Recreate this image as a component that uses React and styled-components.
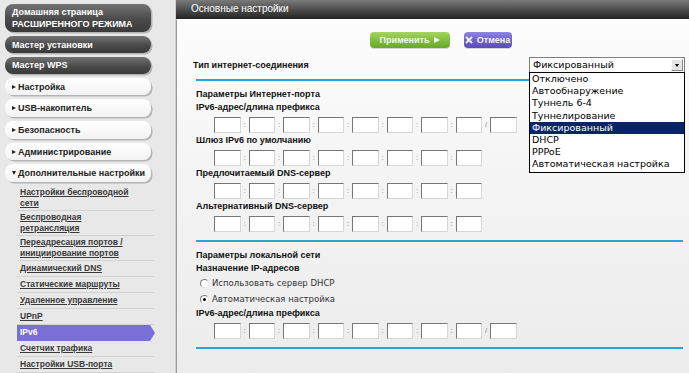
import React from "react";
import styled, { createGlobalStyle } from "styled-components";

const GlobalStyle = createGlobalStyle`
  html, body {
    margin: 0;
    padding: 0;
  }
  body {
    width: 689px;
    height: 373px;
    overflow: hidden;
    background: #e8e8e8;
    font-family: "Liberation Sans", Arial, sans-serif;
  }
`;

const Page = styled.div`
  display: flex;
  width: 689px;
  height: 373px;
  overflow: hidden;
`;

/* ---------- sidebar ---------- */

const Sidebar = styled.nav`
  width: 176px;
  flex-shrink: 0;
  box-sizing: border-box;
  background: #e8e8e8;
  border-right: 1px solid #d0d0d0;
  padding: 4px 0 0 5px;
  display: flex;
  flex-direction: column;
`;

const MenuButton = styled.div`
  width: 146px;
  height: ${({ $size }) => ($size === "tall" ? 29 : $size === "dark" ? 17 : 18)}px;
  margin-top: ${({ $first }) => ($first ? 0 : 4)}px;
  box-sizing: border-box;
  border-radius: 8px;
  padding-left: ${({ $size }) => ($size === "light" ? 7 : 7)}px;
  display: flex;
  align-items: center;
  gap: 2px;
  font: bold 9px/12px "Liberation Sans", Arial, sans-serif;
  color: ${({ $size }) => ($size === "light" ? "#222" : "#fff")};
  background: ${({ $size }) =>
    $size === "light"
      ? "linear-gradient(#ffffff, #f3f3f3)"
      : "linear-gradient(#737373, #4a4a4a 55%, #3a3a3a)"};
  box-shadow: 1.5px 1.5px 0 #b4b4b4;
`;

const Arrow = styled.span`
  width: 0;
  height: 0;
  border-style: solid;
  border-color: transparent;
  ${({ $open }) =>
    $open
      ? "border-width: 4px 2.5px 0 2.5px; border-top-color: #222;"
      : "border-width: 2.5px 0 2.5px 4px; border-left-color: #222;"}
`;

const SubMenu = styled.div`
  margin: 4px 0 0 12px;
  width: 138px;
  display: flex;
  flex-direction: column;
`;

const SubItem = styled.a`
  min-height: 16px;
  box-sizing: border-box;
  padding: 1px 6px 1px 3px;
  display: flex;
  align-items: center;
  border-bottom: 1px solid ${({ $active }) => ($active ? "transparent" : "#d2d2d2")};
  font: bold 8.5px/11px "Liberation Sans", Arial, sans-serif;
  color: ${({ $active }) => ($active ? "#fff" : "#3a3a3a")};
  text-decoration: ${({ $active }) => ($active ? "none" : "underline")};
  background: ${({ $active }) => ($active ? "#7a6fd6" : "transparent")};
  clip-path: ${({ $active }) =>
    $active
      ? "polygon(0 0, calc(100% - 5px) 0, 100% 50%, calc(100% - 5px) 100%, 0 100%)"
      : "none"};
`;

/* ---------- main ---------- */

const Main = styled.main`
  flex: 1;
  min-width: 0;
  display: flex;
  flex-direction: column;
`;

const TitleBar = styled.div`
  height: 19px;
  flex-shrink: 0;
  padding-left: 15px;
  background: linear-gradient(#7a7a7a, #4e4e4e 50%, #242424);
  color: #fff;
  font: 10px/18px "Liberation Sans", Arial, sans-serif;
`;

const Body = styled.div`
  flex: 1;
  border-left: 1px solid #9a9a9a;
  border-top: 1px solid #ffffff;
  background: linear-gradient(#fdfdfd, #f3f3f3 50%, #ececec);
  padding: 12px 4px 0 19px;
  display: flex;
  flex-direction: column;
`;

const ButtonRow = styled.div`
  display: flex;
  justify-content: center;
  gap: 14px;
`;

const ActionButton = styled.button`
  width: ${({ $w }) => $w}px;
  height: 16px;
  border: none;
  border-radius: 4px;
  padding: 0;
  display: flex;
  align-items: center;
  justify-content: center;
  gap: 4px;
  color: #f4f4f4;
  font: bold 9px/16px "Liberation Sans", Arial, sans-serif;
  background: ${({ $kind }) =>
    $kind === "ok"
      ? "linear-gradient(#a5d462, #82bf3c 50%, #6aa82a)"
      : "linear-gradient(#8f86e2, #6f62cc 50%, #5a4db8)"};
  box-shadow: 0 1px 0 rgba(0, 0, 0, 0.15);
`;

const PlayTri = styled.span`
  width: 0;
  height: 0;
  border-style: solid;
  border-color: transparent transparent transparent #f4f4f4;
  border-width: 3.5px 0 3.5px 6px;
`;

const TypeRow = styled.div`
  margin-top: 9px;
  height: 16px;
  display: flex;
  align-items: center;
  justify-content: space-between;
`;

const Label = styled.div`
  font: bold 9px/13px "Liberation Sans", Arial, sans-serif;
  color: #111;
  margin-left: ${({ $shift }) => $shift || 0}px;
`;

const SelectWrap = styled.div`
  position: relative;
  width: 156px;
  height: 16px;
`;

const SelectBox = styled.div`
  height: 16px;
  box-sizing: border-box;
  border: 1px solid #7f7f7f;
  background: #fff;
  display: flex;
  align-items: center;
  padding-left: 3px;
  font: 9.5px/14px "DejaVu Sans", Verdana, sans-serif;
  color: #000;
`;

const SelectText = styled.span`
  flex: 1;
`;

const SelectArrow = styled.span`
  width: 12px;
  height: 12px;
  margin-right: 1px;
  box-sizing: border-box;
  background: #e4e4e4;
  border: 1px solid;
  border-color: #fff #888 #888 #fff;
  display: flex;
  align-items: center;
  justify-content: center;
  &::after {
    content: "";
    border-style: solid;
    border-color: #000 transparent transparent transparent;
    border-width: 3px 2.5px 0 2.5px;
  }
`;

const OptionList = styled.ul`
  position: absolute;
  top: 15px;
  left: 0;
  z-index: 5;
  width: 156px;
  box-sizing: border-box;
  margin: 0;
  padding: 0 0 1px;
  list-style: none;
  border: 1px solid #000;
  background: #fff;
`;

const Option = styled.li`
  height: 12.2px;
  padding-left: 2px;
  font: 9.5px/12.2px "DejaVu Sans", Verdana, sans-serif;
  white-space: nowrap;
  color: ${({ $selected }) => ($selected ? "#fff" : "#000")};
  background: ${({ $selected }) => ($selected ? "#0a246a" : "transparent")};
`;

const Divider = styled.div`
  height: 2px;
  margin: ${({ $top }) => $top}px 2px 0 0;
  background: #27a6dc;
  flex-shrink: 0;
`;

const Heading = styled(Label)`
  margin-top: ${({ $top }) => $top || 0}px;
`;

const FieldRow = styled.div`
  height: 20px;
  box-sizing: border-box;
  padding: 3px 0 0 18px;
  display: flex;
  align-items: flex-start;
`;

const Field = styled.input`
  width: 26.5px;
  height: 16px;
  box-sizing: border-box;
  margin: 0;
  padding: 0;
  border: 1px solid;
  border-color: #767676 #d6d6d6 #d6d6d6 #767676;
  background: #fff;
  flex-shrink: 0;
`;

const Sep = styled.span`
  width: 8px;
  text-align: center;
  font: 8px/16px "Liberation Sans", Arial, sans-serif;
  color: #8a8a8a;
  flex-shrink: 0;
`;

const RadioRow = styled.label`
  height: 16px;
  padding-left: 4px;
  display: flex;
  align-items: center;
  gap: 3px;
  font: 8.5px/16px "DejaVu Sans", Verdana, sans-serif;
  color: #333;
`;

const Radio = styled.span`
  width: 9px;
  height: 9px;
  box-sizing: border-box;
  border-radius: 50%;
  border: 1px solid;
  border-color: #7a7a7a #e6e6e6 #e6e6e6 #7a7a7a;
  background: #fff;
  display: flex;
  align-items: center;
  justify-content: center;
  &::after {
    content: "";
    width: 3px;
    height: 3px;
    border-radius: 50%;
    background: ${({ $checked }) => ($checked ? "#000" : "transparent")};
  }
`;

const subItems = [
  ["Настройки беспроводной", "сети"],
  ["Беспроводная", "ретрансляция"],
  ["Переадресация портов /", "инициирование портов"],
  ["Динамический DNS"],
  ["Статические маршруты"],
  ["Удаленное управление"],
  ["UPnP"],
  ["IPv6"],
  ["Счетчик трафика"],
  ["Настройки USB-порта"],
];

const options = [
  "Отключено",
  "Автообнаружение",
  "Туннель 6-4",
  "Туннелирование",
  "Фиксированный",
  "DHCP",
  "PPPoE",
  "Автоматическая настройка",
];

const AddressFields = ({ prefix }) => (
  <FieldRow>
    {Array.from({ length: 8 }).map((_, i) => (
      <React.Fragment key={i}>
        {i > 0 && <Sep>:</Sep>}
        <Field />
      </React.Fragment>
    ))}
    {prefix && (
      <>
        <Sep>/</Sep>
        <Field />
      </>
    )}
  </FieldRow>
);

const CrossIcon = () => (
  <svg width="8" height="8" viewBox="0 0 8 8">
    <path d="M1 1 L7 7 M7 1 L1 7" stroke="#f4f4f4" strokeWidth="1.8" />
  </svg>
);

export default function App() {
  return (
    <>
      <GlobalStyle />
      <Page>
        <Sidebar>
          <MenuButton $size="tall" $first>
            Домашняя страница
            <br />
            РАСШИРЕННОГО РЕЖИМА
          </MenuButton>
          <MenuButton $size="dark">Мастер установки</MenuButton>
          <MenuButton $size="dark">Мастер WPS</MenuButton>
          <MenuButton $size="light">
            <Arrow />
            Настройка
          </MenuButton>
          <MenuButton $size="light">
            <Arrow />
            USB-накопитель
          </MenuButton>
          <MenuButton $size="light">
            <Arrow />
            Безопасность
          </MenuButton>
          <MenuButton $size="light">
            <Arrow />
            Администрирование
          </MenuButton>
          <MenuButton $size="light">
            <Arrow $open />
            Дополнительные настройки
          </MenuButton>
          <SubMenu>
            {subItems.map((lines) => (
              <SubItem key={lines[0]} $active={lines[0] === "IPv6"}>
                <span>
                  {lines.map((l, i) => (
                    <React.Fragment key={i}>
                      {i > 0 && <br />}
                      {l}
                    </React.Fragment>
                  ))}
                </span>
              </SubItem>
            ))}
          </SubMenu>
        </Sidebar>

        <Main>
          <TitleBar>Основные настройки</TitleBar>
          <Body>
            <ButtonRow>
              <ActionButton $kind="ok" $w={80}>
                Применить
                <PlayTri />
              </ActionButton>
              <ActionButton $kind="cancel" $w={48}>
                <CrossIcon />
                Отмена
              </ActionButton>
            </ButtonRow>

            <TypeRow>
              <Label $shift={-3}>Тип интернет-соединения</Label>
              <SelectWrap>
                <SelectBox>
                  <SelectText>Фиксированный</SelectText>
                  <SelectArrow />
                </SelectBox>
                <OptionList>
                  {options.map((o) => (
                    <Option key={o} $selected={o === "Фиксированный"}>
                      {o}
                    </Option>
                  ))}
                </OptionList>
              </SelectWrap>
            </TypeRow>

            <Divider $top={6} />
            <Heading $top={7}>Параметры Интернет-порта</Heading>
            <Label>IPv6-адрес/длина префикса</Label>
            <AddressFields prefix />
            <Label>Шлюз IPv6 по умолчанию</Label>
            <AddressFields />
            <Label>Предлочитаемый DNS-сервер</Label>
            <AddressFields />
            <Label>Альтернативный DNS-сервер</Label>
            <AddressFields />

            <Divider $top={7} />
            <Heading $top={7}>Параметры локальной сети</Heading>
            <Label>Назначение IP-адресов</Label>
            <RadioRow>
              <Radio />
              Использовать сервер DHCP
            </RadioRow>
            <RadioRow>
              <Radio $checked />
              Автоматическая настройка
            </RadioRow>
            <Label>IPv6-адрес/длина префикса</Label>
            <AddressFields prefix />
            <Divider $top={7} />
          </Body>
        </Main>
      </Page>
    </>
  );
}
